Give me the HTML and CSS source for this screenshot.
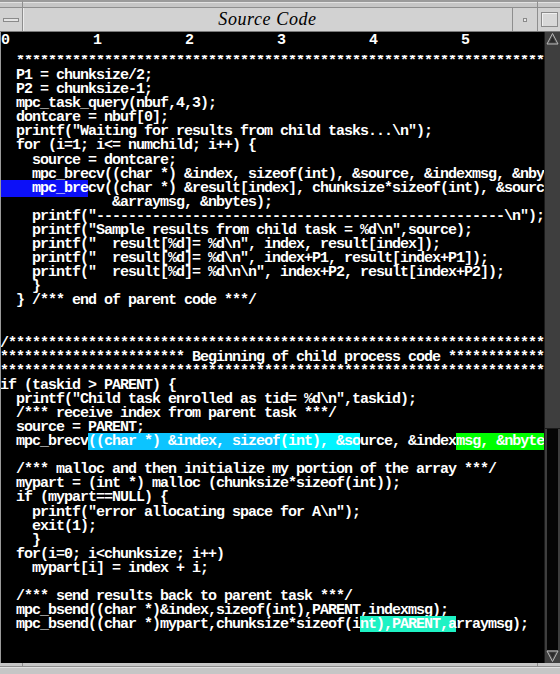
FILE: index.html
```html
<!DOCTYPE html>
<html lang="en">
<head>
    <meta charset="UTF-8">
    <title>Source Code</title>
    <link rel="stylesheet" href="styles.css">
</head>
<body>
    <div class="window">
        <!-- frame top edge -->
        <div class="frame-edge top">
            <div class="corner"></div>
            <div class="edge-mid"></div>
            <div class="corner right"></div>
        </div>

        <!-- title bar -->
        <div class="titlebar">
            <div class="menu-btn"><div class="menu-bar"></div></div>
            <div class="title">Source Code</div>
            <div class="min-btn"><div class="min-dot"></div></div>
            <div class="max-btn"><div class="max-box"></div></div>
        </div>

        <div class="body">
            <div class="pane">
                <div class="ruler">
                    <span>0</span><span>1</span><span>2</span><span>3</span><span>4</span><span>5</span>
                </div>
<pre class="code">  **********************************************************************
  P1 = chunksize/2;
  P2 = chunksize-1;
  mpc_task_query(nbuf,4,3);
  dontcare = nbuf[0];
  printf("Waiting for results from child tasks...\n");
  for (i=1; i&lt;= numchild; i++) {
    source = dontcare;
    mpc_brecv((char *) &amp;index, sizeof(int), &amp;source, &amp;indexmsg, &amp;nbytes);
<span class="hl-blue">    mpc_bre</span>cv((char *) &amp;result[index], chunksize*sizeof(int), &amp;source,
              &amp;arraymsg, &amp;nbytes);
    printf("---------------------------------------------------\n");
    printf("Sample results from child task = %d\n",source);
    printf("  result[%d]= %d\n", index, result[index]);
    printf("  result[%d]= %d\n", index+P1, result[index+P1]);
    printf("  result[%d]= %d\n\n", index+P2, result[index+P2]);
    }
  } /*** end of parent code ***/


/**********************************************************************
*********************** Beginning of child process code ******************
************************************************************************
if (taskid &gt; PARENT) {
  printf("Child task enrolled as tid= %d\n",taskid);
  /*** receive index from parent task ***/
  source = PARENT;
  mpc_brecv<span class="hl-sky">((char *) &amp;index, sizeof</span><span class="hl-cyan">(int), &amp;so</span>urce, &amp;index<span class="hl-green">msg, &amp;nbytes);          </span>

  /*** malloc and then initialize my portion of the array ***/
  mypart = (int *) malloc (chunksize*sizeof(int));
  if (mypart==NULL) {
    printf("error allocating space for A\n");
    exit(1);
    }
  for(i=0; i&lt;chunksize; i++)
    mypart[i] = index + i;

  /*** send results back to parent task ***/
  mpc_bsend((char *)&amp;index,sizeof(int),PARENT,indexmsg);
  mpc_bsend((char *)mypart,chunksize*sizeof(i<span class="hl-aqua">nt),PARENT,a</span>rraymsg);</pre>
            </div>

            <div class="scrollbar">
                <div class="arrow">
                    <svg viewBox="0 0 15 13" width="15" height="13">
                        <polygon points="7.5,1.5 13,12 2,12" fill="#4a4a4a" stroke="#b8b8b8" stroke-width="1"/>
                        <polygon points="7.5,4.5 10.5,10.5 4.5,10.5" fill="#2a2a2a"/>
                    </svg>
                </div>
                <div class="thumb"></div>
                <div class="trough"></div>
                <div class="arrow">
                    <svg viewBox="0 0 15 13" width="15" height="13">
                        <polygon points="2,1 13,1 7.5,11.5" fill="#4a4a4a" stroke="#b8b8b8" stroke-width="1"/>
                        <polygon points="4.5,2.5 10.5,2.5 7.5,8.5" fill="#2a2a2a"/>
                    </svg>
                </div>
            </div>
        </div>

        <!-- frame bottom edge -->
        <div class="frame-edge bottom">
            <div class="corner"></div>
            <div class="edge-mid"></div>
            <div class="corner right"></div>
        </div>
    </div>
</body>
</html>
```

FILE: styles.css
```css
body {
    margin: 0;
    background: #c8c8c8;
}
.window {
    width: 560px;
    height: 674px;
    display: flex;
    flex-direction: column;
    background: #c8c8c8;
    overflow: hidden;
}

/* frame edges */
.frame-edge {
    display: flex;
    flex-shrink: 0;
    background: #c6c6c6;
}
.frame-edge.top {
    height: 7px;
}
.frame-edge.bottom {
    height: 11px;
}
.frame-edge.top > div {
    border-top: 2px solid #9a9a9a;
    box-shadow: inset 0 1px 0 #e2e2e2;
}
.frame-edge.bottom > div {
    height: 3px;
    border-bottom: 1px solid #8e8e8e;
    box-shadow: 0 1px 0 #e2e2e2;
}
.corner {
    width: 22px;
    border-right: 1px solid #8e8e8e;
}
.corner.right {
    width: 22px;
    border-right: none;
    border-left: 1px solid #8e8e8e;
}
.edge-mid {
    flex: 1;
}

/* title bar */
.titlebar {
    height: 23px;
    display: flex;
    flex-shrink: 0;
    background: #d2d2d2;
    border-top: 1px solid #8e8e8e;
    border-bottom: 1px solid #7a7a7a;
}
.menu-btn {
    width: 22px;
    border-right: 1px solid #8e8e8e;
    display: flex;
    align-items: center;
    justify-content: center;
}
.menu-bar {
    width: 14px;
    height: 2px;
    border: 1px solid #8a8a8a;
    background: #e4e4e4;
    margin-top: 1px;
}
.title {
    flex: 1;
    text-align: center;
    font-family: "Liberation Serif", serif;
    font-style: italic;
    font-size: 18px;
    letter-spacing: 0.6px;
    line-height: 23px;
    color: #000;
    box-shadow: inset 1px 0 0 #ececec;
}
.min-btn {
    width: 24px;
    border-left: 1px solid #8e8e8e;
    display: flex;
    align-items: center;
    justify-content: center;
}
.min-dot {
    width: 2px;
    height: 2px;
    border: 1px solid #8a8a8a;
    background: #e8e8e8;
}
.max-btn {
    width: 22px;
    border-left: 1px solid #8e8e8e;
    display: flex;
    align-items: center;
    justify-content: center;
}
.max-box {
    width: 15px;
    height: 13px;
    border: 1px solid #8a8a8a;
    background: #d8d8d8;
    box-shadow: inset 1px 1px 0 #f0f0f0;
}

/* text area */
.body {
    flex: 1;
    display: flex;
    background: #000;
    min-height: 0;
}
.pane {
    flex: 1;
    display: flex;
    flex-direction: column;
    overflow: hidden;
    border-left: 1px solid #9a9a9a;
}
.ruler {
    height: 22px;
    display: flex;
    flex-shrink: 0;
    color: #fff;
    font-family: "Liberation Mono", monospace;
    font-weight: bold;
    font-size: 15px;
    line-height: 15px;
    padding-top: 1px;
}
.ruler span {
    width: 92px;
    flex-shrink: 0;
}
.code {
    margin: 0;
    color: #fff;
    font-family: "Liberation Mono", monospace;
    font-weight: bold;
    font-size: 15px;
    letter-spacing: -1px;
    line-height: 14.08px;
    white-space: pre;
    overflow: hidden;
    margin-left: -1px;
}
.hl-blue {
    background: #0c10f8;
}
.hl-sky {
    background: #0cc4ff;
}
.hl-cyan {
    background: #00f4ff;
}
.hl-green {
    background: #00ff00;
}
.hl-aqua {
    background: #1ef2c4;
}

/* scrollbar */
.scrollbar {
    width: 15px;
    flex-shrink: 0;
    display: flex;
    flex-direction: column;
    background: #3e3e3e;
    border-left: 1px solid #1a1a1a;
}
.arrow {
    height: 13px;
    flex-shrink: 0;
}
.arrow svg {
    display: block;
}
.thumb {
    height: 383px;
    background: #3e3e3e;
    border-bottom: 1px solid #1a1a1a;
}
.trough {
    flex: 1;
    margin: 0 2px;
    background: #050505;
}
```
